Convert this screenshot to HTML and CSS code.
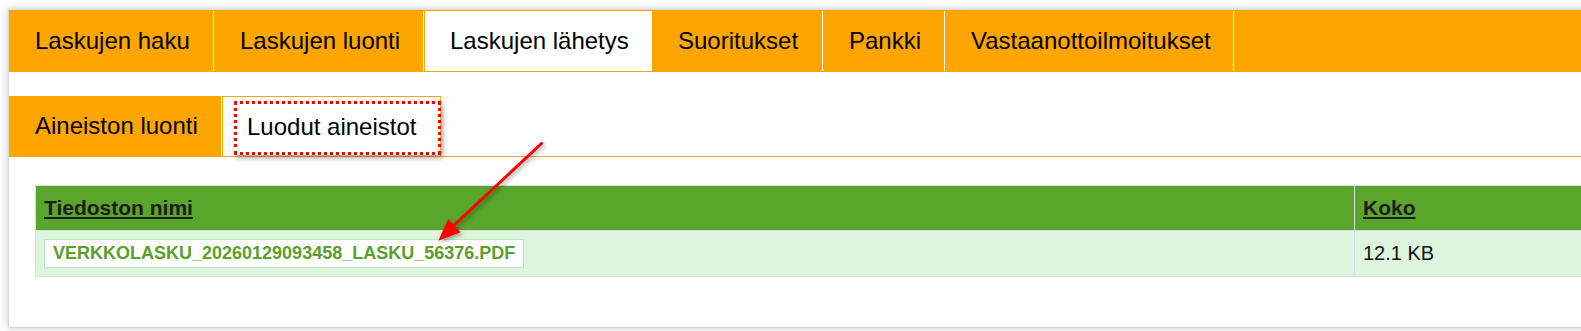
FILE: index.html
```html
<!DOCTYPE html>
<html lang="fi">
<head>
<meta charset="utf-8">
<title>Laskujen lähetys</title>
<link rel="stylesheet" href="styles.css">
</head>
<body>
<div class="page">
  <div class="panel">
    <nav class="main-tabs">
      <a class="tab tab-haku">Laskujen haku</a>
      <a class="tab tab-luonti">Laskujen luonti</a>
      <a class="tab tab-lahetys active">Laskujen lähetys</a>
      <a class="tab tab-suoritukset">Suoritukset</a>
      <a class="tab tab-pankki">Pankki</a>
      <a class="tab tab-vastaanotto">Vastaanottoilmoitukset</a>
    </nav>
    <nav class="sub-tabs">
      <a class="subtab">Aineiston luonti</a>
      <a class="subtab active">Luodut aineistot<span class="highlight"></span></a>
    </nav>
    <div class="content">
      <table class="files">
        <colgroup>
          <col class="col-name">
          <col class="col-size">
        </colgroup>
        <thead>
          <tr>
            <th><a>Tiedoston nimi</a></th>
            <th><a>Koko</a></th>
          </tr>
        </thead>
        <tbody>
          <tr>
            <td><a class="file-link">VERKKOLASKU_20260129093458_LASKU_56376.PDF</a></td>
            <td class="size">12.1 KB</td>
          </tr>
        </tbody>
      </table>
    </div>
  </div>
  <svg class="arrow" width="1581" height="331" viewBox="0 0 1581 331">
    <g class="arrow-shape">
      <line x1="541.5" y1="143.5" x2="452" y2="227"></line>
      <polygon points="438.3,240.7 448.1,219 460.5,232.2"></polygon>
    </g>
  </svg>
</div>
</body>
</html>
```

FILE: styles.css
```css
html, body {
  margin: 0;
  padding: 0;
  overflow: hidden;
  background: #ffffff;
}

body {
  font-family: "Liberation Sans", Arial, sans-serif;
  color: #000;
}

.page {
  position: relative;
  width: 1581px;
  height: 331px;
  padding: 9px 0 0 8px;
  box-sizing: border-box;
}

.panel {
  width: 1640px;
  border: 1px solid #d8d8d8;
  background: #fff;
  box-shadow: 0 0 8px rgba(0, 0, 0, 0.22);
}

/* main tabs */
.main-tabs {
  display: flex;
  background: #ffa500;
  padding: 1px 0;
}

.tab {
  box-sizing: border-box;
  height: 60px;
  display: flex;
  align-items: center;
  padding-left: 26px;
  font-size: 24px;
  color: #000;
  border-right: 1px solid #ffffff;
  white-space: nowrap;
}

.tab-haku { width: 205px; }
.tab-luonti { width: 210px; }
.tab-lahetys { width: 228px; }
.tab-suoritukset { width: 171px; }
.tab-pankki { width: 122px; }
.tab-vastaanotto { width: 289px; }

.tab.active {
  background: #ffffff;
  border-left: 1px solid #ffa500;
  border-right: none;
  padding-left: 25px;
}

/* sub tabs */
.sub-tabs {
  display: flex;
  margin-top: 24px;
  border-bottom: 1px solid #f2a51c;
}

.subtab {
  box-sizing: border-box;
  height: 60px;
  display: flex;
  align-items: center;
  font-size: 24px;
  color: #000;
  white-space: nowrap;
}

.subtab:first-child {
  width: 212px;
  padding-left: 26px;
  background: #ffa500;
  margin-right: 1px;
}

.subtab.active {
  position: relative;
  width: 219px;
  padding-left: 24px;
  background: #fff;
  border: 1px solid #ffa500;
  border-bottom: none;
}

.highlight {
  position: absolute;
  left: 11px;
  top: 4px;
  width: 207px;
  height: 54px;
  box-sizing: border-box;
  border: 3px dotted #ff0000;
  box-shadow: 2px 3px 5px rgba(0, 0, 0, 0.35);
}

/* content */
.content {
  padding: 28px 0 50px 26px;
}

.files {
  border-collapse: collapse;
  table-layout: fixed;
  width: 1600px;
  border: 1px solid #d7dee4;
}

.col-name { width: 1319px; }

.files th {
  height: 45px;
  box-sizing: border-box;
  background: #5aa52c;
  text-align: left;
  padding: 0 8px;
  font-size: 21px;
  font-weight: bold;
  border-left: 1px solid #d7dee4;
}

.files th a {
  color: #1c1c1c;
  text-decoration: underline;
  text-decoration-thickness: 2px;
  text-underline-offset: 2px;
}

.files td {
  height: 46px;
  box-sizing: border-box;
  background: #ddf5dc;
  padding: 0 8px;
  border-left: 1px solid #d7dee4;
  border-top: 1px solid #d7dee4;
}

.file-link {
  display: inline-block;
  background: #fff;
  border: 1px solid #b7e8c0;
  color: #5a9f2b;
  font-weight: bold;
  font-size: 18px;
  line-height: 27px;
  padding: 0 8px;
}

.size {
  font-size: 20px;
  color: #111;
}

/* annotation arrow */
.arrow {
  position: absolute;
  left: 0;
  top: 0;
  pointer-events: none;
  filter: drop-shadow(2px 2px 2px rgba(0, 0, 0, 0.35));
}

.arrow-shape line {
  stroke: #ff0000;
  stroke-width: 3;
  stroke-linecap: round;
}

.arrow-shape polygon {
  fill: #ff0000;
}
```
